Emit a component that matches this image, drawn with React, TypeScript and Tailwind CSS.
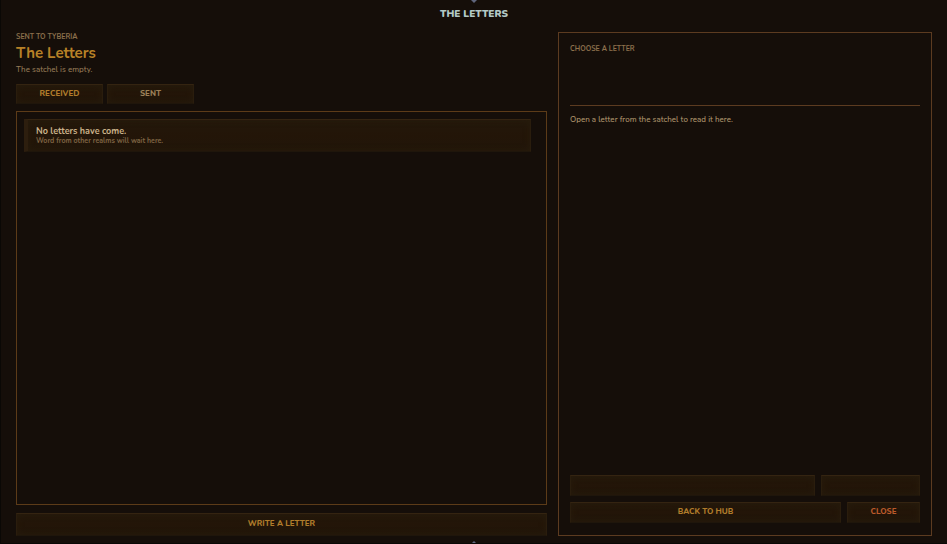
import type { ButtonHTMLAttributes } from "react";

const tones = {
  gold: "text-[#b07c2b]",
  muted: "text-[#9c8058]",
  ember: "text-[#b9592a]",
};

type PlankButtonProps = ButtonHTMLAttributes<HTMLButtonElement> & { tone?: keyof typeof tones };

function PlankButton({ className = "", tone = "gold", children, ...rest }: PlankButtonProps) {
  return (
    <button
      type="button"
      className={`flex items-center justify-center border border-[#2a1d0d] border-t-[#342411] border-b-[#1f160b] bg-linear-to-b from-[#23180b] via-[#231508] to-[#21160a] text-[8px] leading-3 font-extrabold shadow-[inset_0_0_6px_#281c0c] ${tones[tone]} ${className}`}
      {...rest}
    >
      {children}
    </button>
  );
}

function EdgeGem({ className }: { className: string }) {
  return (
    <svg aria-hidden="true" viewBox="0 0 8 8" className={`absolute left-1/2 h-2 w-2 -translate-x-1/2 ${className}`}>
      <path d="M4 0L8 4L4 8L0 4Z" fill="#5f657c" />
    </svg>
  );
}

export default function App() {
  return (
    <div className="relative flex h-screen flex-col overflow-hidden border-l border-b border-[#0a0805] bg-[#150e09] pr-[15px] pb-[7px] pl-[15px] font-['Nunito','Open_Sans',sans-serif]">
      <EdgeGem className="-top-[5px]" />
      <EdgeGem className="-bottom-[6px]" />
      <header className="flex h-8 shrink-0 items-center justify-center pb-1">
        <h1 className="text-[10px] leading-4 font-black text-[#b3c9c6]">THE LETTERS</h1>
      </header>

      <main className="grid min-h-0 flex-1 grid-cols-[142fr_100fr] gap-[11px]">
        <section className="flex min-h-0 flex-col">
          <p className="text-[7px] leading-[10px] font-bold text-[#8c704c]">SENT TO TYBERIA</p>
          <h2 className="text-[15px] leading-[22px] font-bold text-[#b88227]">The Letters</h2>
          <p className="text-[8px] leading-3 font-medium text-[#957b57]">The satchel is empty.</p>
          <nav className="mt-2 flex gap-1" aria-label="Letter folders">
            <PlankButton className="h-5 w-[87px]">RECEIVED</PlankButton>
            <PlankButton className="h-5 w-[87px]" tone="muted">SENT</PlankButton>
          </nav>
          <div className="mt-[7px] min-h-0 flex-1 border border-[#5c3b18] py-[7px] pr-[15px] pl-[7px]">
            <article className="border border-l-4 border-[#2a1d0d] border-t-[#342411] border-b-[#1f160b] border-l-[#2d1e0e] bg-linear-to-b from-[#23180b] via-[#231508] to-[#21160a] px-2 py-[6px] shadow-[inset_0_0_6px_#281c0c]">
              <h3 className="text-[9px] leading-[11px] font-bold text-[#cbb28a]">No letters have come.</h3>
              <p className="text-[7px] leading-2 font-bold text-[#7f6443]">Word from other realms will wait here.</p>
            </article>
          </div>
          <PlankButton className="mt-2 h-[23px] w-full pb-px">WRITE A LETTER</PlankButton>
        </section>

        <section className="flex min-h-0 flex-col border border-[#5c3b20] p-[11px] pb-[12px]">
          <div className="h-[62px] shrink-0 border-b border-[#5c3b20]">
            <h2 className="text-[7px] leading-[10px] font-bold text-[#8c704c]">CHOOSE A LETTER</h2>
          </div>
          <p className="mt-2 flex-1 text-[8px] leading-3 font-medium text-[#b0966d]">Open a letter from the satchel to read it here.</p>
          <div className="grid grid-cols-[245fr_99fr] gap-[6px]">
            <PlankButton className="h-[21px]" disabled aria-label="Reply" />
            <PlankButton className="h-[21px]" disabled aria-label="Discard" />
          </div>
          <div className="mt-[6px] grid grid-cols-[271fr_73fr] gap-[6px]">
            <PlankButton className="h-[21px] pb-px">BACK TO HUB</PlankButton>
            <PlankButton className="h-[21px] pb-px" tone="ember">CLOSE</PlankButton>
          </div>
        </section>
      </main>
    </div>
  );
}
